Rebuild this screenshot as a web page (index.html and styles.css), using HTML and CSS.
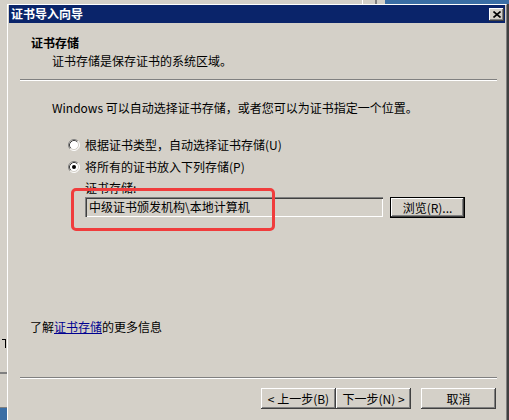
FILE: index.html
```html
<!DOCTYPE html>
<html>
<head>
    <title>证书导入向导</title>
    <link rel="stylesheet" href="styles.css">
</head>
<body>
    <div class="desk">
        <div class="peek-top">
            <span class="peek-fill"></span>
            <span class="peek-hl"></span>
            <span class="peek-mid"></span>
            <span class="peek-dark"></span>
            <span class="peek-mid2"></span>
            <span class="peek-blue"></span>
        </div>
        <div class="row">
            <div class="peek-left">
                <span class="peek-bracket"></span>
                <span class="peek-line"></span>
                <span class="peek-desk"></span>
            </div>
            <div class="frame">
                <div class="dialog">
                    <div class="titlebar">
                        <span class="title">证书导入向导</span>
                        <button class="close">
                            <svg width="8" height="7" viewBox="0 0 8 7">
                                <path d="M0.5 0.5 L7.5 6.5 M7.5 0.5 L0.5 6.5" stroke="#000" stroke-width="1.6"/>
                            </svg>
                        </button>
                    </div>

                    <div class="header">
                        <div class="heading">证书存储</div>
                        <div class="subtitle">证书存储是保存证书的系统区域。</div>
                    </div>
                    <div class="sep"></div>

                    <div class="main">
                        <p class="intro">Windows 可以自动选择证书存储，或者您可以为证书指定一个位置。</p>

                        <label class="radio first">
                            <svg class="dot" width="12" height="12" viewBox="0 0 12 12">
                                <circle cx="6" cy="6" r="5" fill="#fff"/>
                                <path d="M2.11 9.89 A5.5 5.5 0 0 1 9.89 2.11" fill="none" stroke="#808080"/>
                                <path d="M2.82 9.18 A4.5 4.5 0 0 1 9.18 2.82" fill="none" stroke="#404040"/>
                                <path d="M9.89 2.11 A5.5 5.5 0 0 1 2.11 9.89" fill="none" stroke="#fff"/>
                                <path d="M9.18 2.82 A4.5 4.5 0 0 1 2.82 9.18" fill="none" stroke="#d4d0c8"/>
                            </svg>
                            根据证书类型，自动选择证书存储(U)
                        </label>
                        <label class="radio">
                            <svg class="dot" width="12" height="12" viewBox="0 0 12 12">
                                <circle cx="6" cy="6" r="5" fill="#fff"/>
                                <path d="M2.11 9.89 A5.5 5.5 0 0 1 9.89 2.11" fill="none" stroke="#808080"/>
                                <path d="M2.82 9.18 A4.5 4.5 0 0 1 9.18 2.82" fill="none" stroke="#404040"/>
                                <path d="M9.89 2.11 A5.5 5.5 0 0 1 2.11 9.89" fill="none" stroke="#fff"/>
                                <path d="M9.18 2.82 A4.5 4.5 0 0 1 2.82 9.18" fill="none" stroke="#d4d0c8"/>
                                <circle cx="6" cy="6" r="2" fill="#000"/>
                            </svg>
                            将所有的证书放入下列存储(P)
                        </label>

                        <div class="store">
                            <div class="store-label">证书存储:</div>
                            <div class="store-row">
                                <div class="field">中级证书颁发机构\本地计算机</div>
                                <button class="btn default">浏览(R)...</button>
                            </div>
                        </div>

                        <p class="more">了解<a href="#">证书存储</a>的更多信息</p>

                        <!-- red annotation frame drawn on top of the screenshot -->
                        <div class="mark"></div>
                    </div>

                    <div class="sep"></div>
                    <div class="footer">
                        <button class="btn">&lt; 上一步(B)</button>
                        <button class="btn">下一步(N) &gt;</button>
                        <button class="btn cancel">取消</button>
                    </div>
                </div>
            </div>
        </div>
    </div>
</body>
</html>
```

FILE: styles.css
```css
body {
    margin: 0;
    font-family: "Noto Sans CJK SC", "Noto Sans", sans-serif;
    font-size: 12px;
    color: #000;
}
.desk {
    width: 509px;
    height: 420px;
    overflow: hidden;
    background: #d4d0c8;
}

/* bits of the windows behind the dialog */
.peek-top {
    display: flex;
    height: 4px;
}
.peek-fill { flex: 0 0 362px; }
.peek-hl { flex: 0 0 1px; background: #fff; }
.peek-mid { flex: 0 0 12px; }
.peek-dark { flex: 0 0 2px; background: #808080; }
.peek-mid2 { flex: 0 0 8px; }
.peek-blue { flex: 1; background: #3a6ea5; }

.row {
    display: flex;
    height: 416px;
}
.peek-left {
    width: 7px;
    display: flex;
    flex-direction: column;
}
.peek-bracket {
    width: 3px;
    height: 8px;
    margin: 335px 0 0 2px;
    border-top: 1px solid #000;
    border-right: 1px solid #000;
}
.peek-line {
    height: 2px;
    margin-top: 24px;
    background: #808080;
}
.peek-desk {
    flex: 1;
    margin-top: 33px;
    border-top: 1px solid #808080;
    background: #3a6ea5;
}

.frame {
    border-right: 2px solid #404040;
    flex: 1;
}
.dialog {
    height: 100%;
    border-top: 1px solid #fff;
    border-left: 1px solid #fff;
    border-right: 1px solid #808080;
    padding: 0 1px;
    display: flex;
    flex-direction: column;
}

.titlebar {
    height: 18px;
    background: #0a246a;
    display: flex;
    justify-content: space-between;
}
.title {
    color: #fff;
    font-weight: bold;
    line-height: 18px;
    padding-left: 2px;
}
.close {
    width: 15px;
    height: 13px;
    margin: 3px 1px 0 0;
    padding: 0;
    border: none;
    background: #d4d0c8;
    box-shadow: inset -1px -1px #404040, inset 1px 1px #fff, inset -2px -2px #808080;
    display: flex;
    align-items: center;
    justify-content: center;
}

.header {
    padding: 11px 0 9px 22px;
    line-height: 18px;
}
.heading { font-weight: bold; }
.subtitle { padding-left: 21px; }

.sep {
    margin: 0 8px 0 11px;
    border-top: 1px solid #808080;
    border-bottom: 1px solid #fff;
}

.main {
    position: relative;
    height: 296px;
    display: flex;
    flex-direction: column;
    line-height: 18px;
}
.intro {
    margin: 18px 0 0 43px;
}
.radio {
    display: flex;
    align-items: center;
    gap: 5px;
    margin: 4px 0 0 59px;
}
.radio.first { margin-top: 19px; }

.store {
    margin-left: 76px;
}
.store-label {
    line-height: 16px;
    margin-top: 4px;
}
.store-row {
    display: flex;
    align-items: flex-start;
    gap: 7px;
    margin-top: 1px;
}
.field {
    width: 298px;
    height: 20px;
    box-sizing: border-box;
    padding-left: 4px;
    line-height: 20px;
    background: #d4d0c8;
    box-shadow: inset 1px 1px #808080, inset 2px 2px #404040, inset -1px -1px #fff, inset -2px -2px #d4d0c8;
}

.more {
    margin: auto 0 41px 21px;
}
.more a {
    color: #000090;
    text-decoration: underline;
}

.mark {
    position: absolute;
    left: 62px;
    top: 107px;
    width: 204px;
    height: 43px;
    box-sizing: border-box;
    border: 3px solid #f03c3c;
    border-radius: 5px;
}

.btn {
    width: 75px;
    height: 21px;
    padding: 0;
    border: none;
    background: #d4d0c8;
    font-family: inherit;
    font-size: 12px;
    color: #000;
    box-shadow: inset -1px -1px #404040, inset 1px 1px #fff, inset -2px -2px #808080;
}
.btn.default {
    border: 1px solid #000;
}
.footer {
    display: flex;
    justify-content: flex-end;
    padding: 9px 9px 0 0;
}
.btn.cancel {
    margin-left: 10px;
}
```
